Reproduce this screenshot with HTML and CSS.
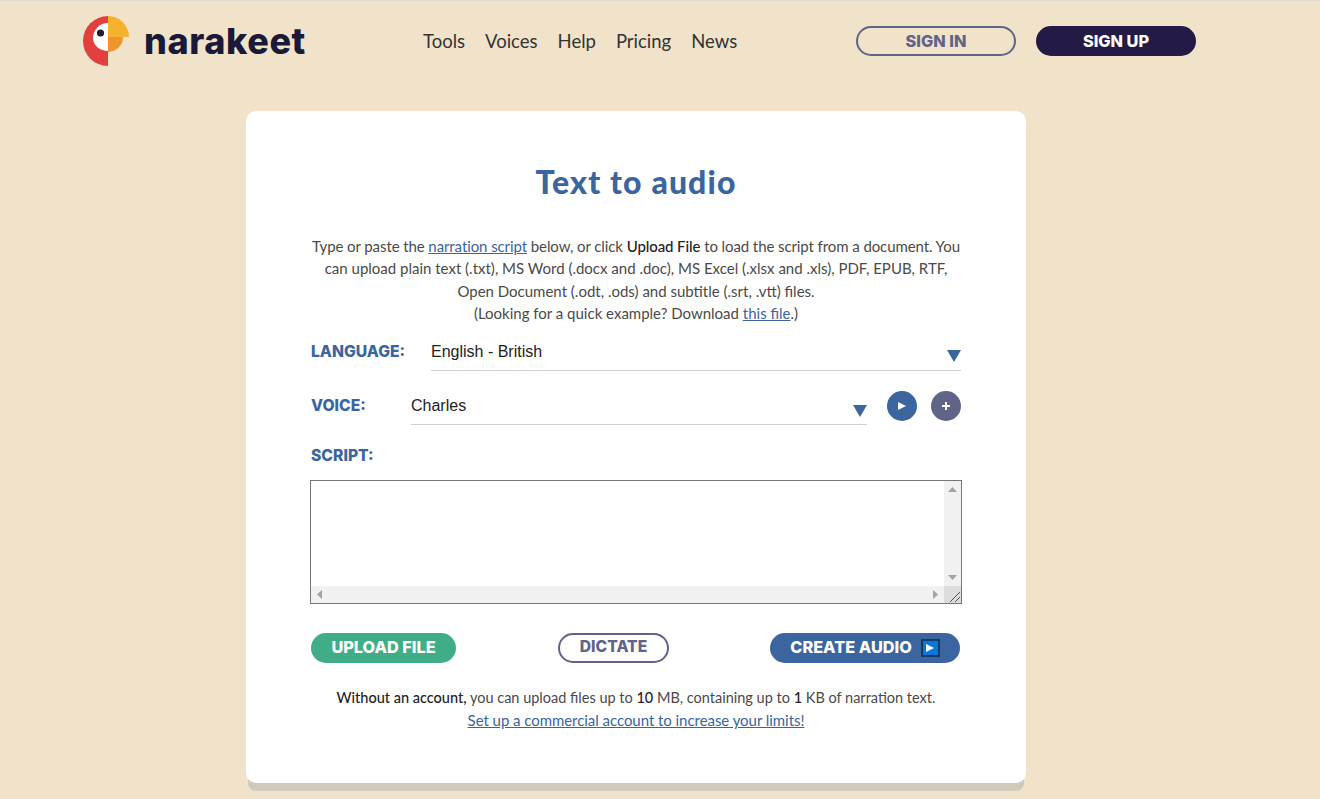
FILE: index.html
```html
<!DOCTYPE html>
<html lang="en">
<head>
<meta charset="utf-8">
<title>Text to audio - Narakeet</title>
<link rel="stylesheet" href="styles.css">
</head>
<body>
<header class="site-header">
  <a class="logo" href="#">
    <svg class="logo-mark" width="46" height="50" viewBox="0 0 46 50">
      <path d="M25 0A25 25 0 0 0 25 50Z" fill="#e2403c"/>
      <path d="M25 7A15 15 0 0 0 10 22A15 13 0 0 0 25 35Z" fill="#fff"/>
      <path d="M25 0A21 21 0 0 1 46 21H25Z" fill="#f6b22d"/>
      <path d="M25 21H40A15 15 0 0 1 25 36Z" fill="#f0942c"/>
      <circle cx="17.5" cy="17" r="3.6" fill="#1b1b3a"/>
    </svg>
    <span class="logo-text">narakeet</span>
  </a>
  <nav class="nav">
    <a href="#">Tools</a>
    <a href="#">Voices</a>
    <a href="#">Help</a>
    <a href="#">Pricing</a>
    <a href="#">News</a>
  </nav>
  <div class="auth">
    <a class="btn btn-outline btn-auth" href="#">SIGN IN</a>
    <a class="btn btn-dark btn-auth" href="#">SIGN UP</a>
  </div>
</header>
<main class="card">
  <h1 class="title">Text to audio</h1>
  <p class="intro"><span class="intro-first">Type or paste the <a href="#">narration script</a> below, or click <b>Upload File</b> to load the script from a document. You</span><br>can upload plain text (.txt), MS Word (.docx and .doc), MS Excel (.xlsx and .xls), PDF, EPUB, RTF,<br>Open Document (.odt, .ods) and subtitle (.srt, .vtt) files.<br>(Looking for a quick example? Download <a href="#">this file</a>.)</p>
  <div class="row row-language">
    <label class="label label-language">LANGUAGE:</label>
    <div class="select"><span>English - British</span></div>
  </div>
  <div class="row row-voice">
    <label class="label label-voice">VOICE:</label>
    <div class="select"><span>Charles</span></div>
    <button class="round round-play" aria-label="Play"><svg width="8" height="8" viewBox="0 0 8 8"><path d="M0 0L8 4L0 8Z" fill="#fff"/></svg></button>
    <button class="round round-add" aria-label="Add"><svg width="8" height="8" viewBox="0 0 8 8"><path d="M3 0H5V3H8V5H5V8H3V5H0V3H3Z" fill="#fff"/></svg></button>
  </div>
  <div class="label label-script">SCRIPT:</div>
  <div class="script-box">
    <textarea class="script" wrap="off"></textarea>
    <div class="bar bar-v">
      <svg width="9" height="5" viewBox="0 0 9 5"><path d="M4.5 0L9 5H0Z"/></svg>
      <svg width="9" height="5" viewBox="0 0 9 5"><path d="M4.5 5L9 0H0Z"/></svg>
    </div>
    <div class="bar bar-h">
      <svg width="5" height="9" viewBox="0 0 5 9"><path d="M0 4.5L5 0V9Z"/></svg>
      <svg width="5" height="9" viewBox="0 0 5 9"><path d="M5 4.5L0 0V9Z"/></svg>
    </div>
    <div class="bar-corner">
      <svg width="17" height="17" viewBox="0 0 17 17"><path d="M6 16L16 6M11 16L16 11"/></svg>
    </div>
  </div>
  <div class="actions">
    <a class="btn btn-green" href="#">UPLOAD FILE</a>
    <a class="btn btn-outline btn-dictate" href="#">DICTATE</a>
    <a class="btn btn-blue" href="#">CREATE AUDIO <span class="play-box"><svg width="8" height="8" viewBox="0 0 8 8"><path d="M0 0L8 4L0 8Z" fill="#fff"/></svg></span></a>
  </div>
  <p class="note"><b>Without an account,</b> you can upload files up to <b>10</b> MB, containing up to <b>1</b> KB of narration text.<br><a href="#">Set up a commercial account to increase your limits!</a></p>
</main>
</body>
</html>
```
FILE: styles.css
```css
* { box-sizing: border-box; }
html, body { margin: 0; height: 799px; overflow: hidden; }
body {
  background: #f1e2ca;
  border-top: 1px solid #e3dccf;
  font-family: Lato, "Open Sans", sans-serif;
  color: #4a4a4a;
}
a { color: inherit; text-decoration: none; }
.site-header {
  display: flex;
  align-items: center;
  height: 80px;
  padding-left: 83px;
}
.logo { display: flex; align-items: center; width: 340px; }
.logo-mark { display: block; }
.logo-text {
  margin-left: 15px;
  font-family: Inter, sans-serif;
  font-weight: 800;
  font-size: 36px;
  line-height: 1;
  letter-spacing: 0.6px;
  color: #1a1a38;
}
.nav {
  display: flex;
  gap: 20px;
  width: 433px;
  margin-top: -1px;
  font-size: 18.5px;
  color: #333;
}
.auth { display: flex; gap: 20px; }
.btn {
  display: flex;
  align-items: center;
  justify-content: center;
  height: 30px;
  border-radius: 15px;
  font-family: Inter, sans-serif;
  font-weight: 800;
  font-size: 16.3px;
  color: #fff;
}
.btn-auth { width: 160px; padding-bottom: 1px; }
.btn-outline { border: 2px solid #5f6488; color: #5f6488; }
.btn-dark { background: #231b45; }
.card {
  width: 780px;
  height: 672px;
  margin: 30px 0 0 246px;
  padding: 0 65px;
  background: #fff;
  border-radius: 10px;
  box-shadow: 0 10px 0 -2px #d0c9bc;
}
.title {
  margin: 0;
  padding-top: 51px;
  font-family: Lato, sans-serif;
  font-weight: 900;
  font-size: 32px;
  line-height: 40px;
  letter-spacing: 1.1px;
  text-align: center;
  color: #3a659f;
}
.intro {
  margin: 33px 0 0;
  font-size: 15px;
  line-height: 22.4px;
  text-align: center;
  white-space: nowrap;
  color: #4a4a4a;
}
.intro-first { letter-spacing: -0.09px; }
.intro b, .note b { font-weight: 500; color: #222; }
.intro a, .note a { color: #3a659f; text-decoration: underline; }
.row { display: flex; align-items: flex-start; height: 38px; }
.row-language { margin-top: 8px; }
.row-voice { margin-top: 16px; }
.label {
  font-family: Inter, sans-serif;
  font-weight: 800;
  font-size: 15.7px;
  line-height: 20px;
  color: #3a659f;
}
.label-language { width: 120px; padding-top: 9px; }
.label-voice { width: 100px; padding-top: 9px; }
.label-script { margin-top: 21px; height: 20px; }
.select {
  position: relative;
  flex: 1;
  height: 38px;
  padding-top: 8px;
  border-bottom: 1px solid #cfcfcf;
  font-family: "Liberation Sans", Arial, sans-serif;
  font-size: 16px;
  line-height: 22px;
  color: #222;
}
.select::after {
  content: "";
  position: absolute;
  right: 0;
  top: 17px;
  border-left: 7px solid transparent;
  border-right: 7px solid transparent;
  border-top: 12px solid #3a659f;
}
.row-voice .select::after { top: 18px; }
.round {
  display: flex;
  align-items: center;
  justify-content: center;
  width: 30px;
  height: 30px;
  margin-top: 4px;
  padding: 0;
  border: 0;
  border-radius: 50%;
}
.round-play { margin-left: 20px; background: #3a659f; }
.round-add { margin-left: 14px; background: #5f6488; }
.script-box {
  position: relative;
  width: 652px;
  height: 124px;
  margin: 14px 0 0 -1px;
}
.script {
  display: block;
  width: 100%;
  height: 100%;
  padding: 2px;
  border: 1px solid #767676;
  background: #fff;
  overflow: hidden;
  resize: none;
}
.bar { position: absolute; display: flex; align-items: center; justify-content: space-between; background: #f1f1f1; }
.bar svg { display: block; fill: #a3a3a3; }
.bar-v {
  flex-direction: column;
  top: 1px;
  right: 1px;
  bottom: 18px;
  width: 17px;
  padding: 6px 0;
}
.bar-h {
  left: 1px;
  right: 18px;
  bottom: 1px;
  height: 17px;
  padding: 0 6px;
}
.bar-corner {
  position: absolute;
  right: 1px;
  bottom: 1px;
  width: 17px;
  height: 17px;
  background: #dcdcdc;
}
.bar-corner svg { display: block; stroke: #555; fill: none; }
.actions {
  display: flex;
  margin: 29px 0 0;
}
.actions .btn { padding-bottom: 2px; }
.btn-green { width: 145px; background: #41ad87; }
.btn-dictate { width: 111px; margin-left: 102px; font-size: 15.7px; }
.btn-blue { width: 190px; margin-left: 101px; background: #3a659f; gap: 9px; }
.play-box {
  display: flex;
  align-items: center;
  justify-content: center;
  width: 19px;
  height: 18px;
  margin-top: 2px;
  border: 2px solid #123a6b;
  background: #0a78d8;
}
.note {
  margin: 23px 0 0;
  font-size: 14.5px;
  line-height: 23px;
  text-align: center;
}
.note a { font-size: 15px; letter-spacing: -0.05px; }
```
